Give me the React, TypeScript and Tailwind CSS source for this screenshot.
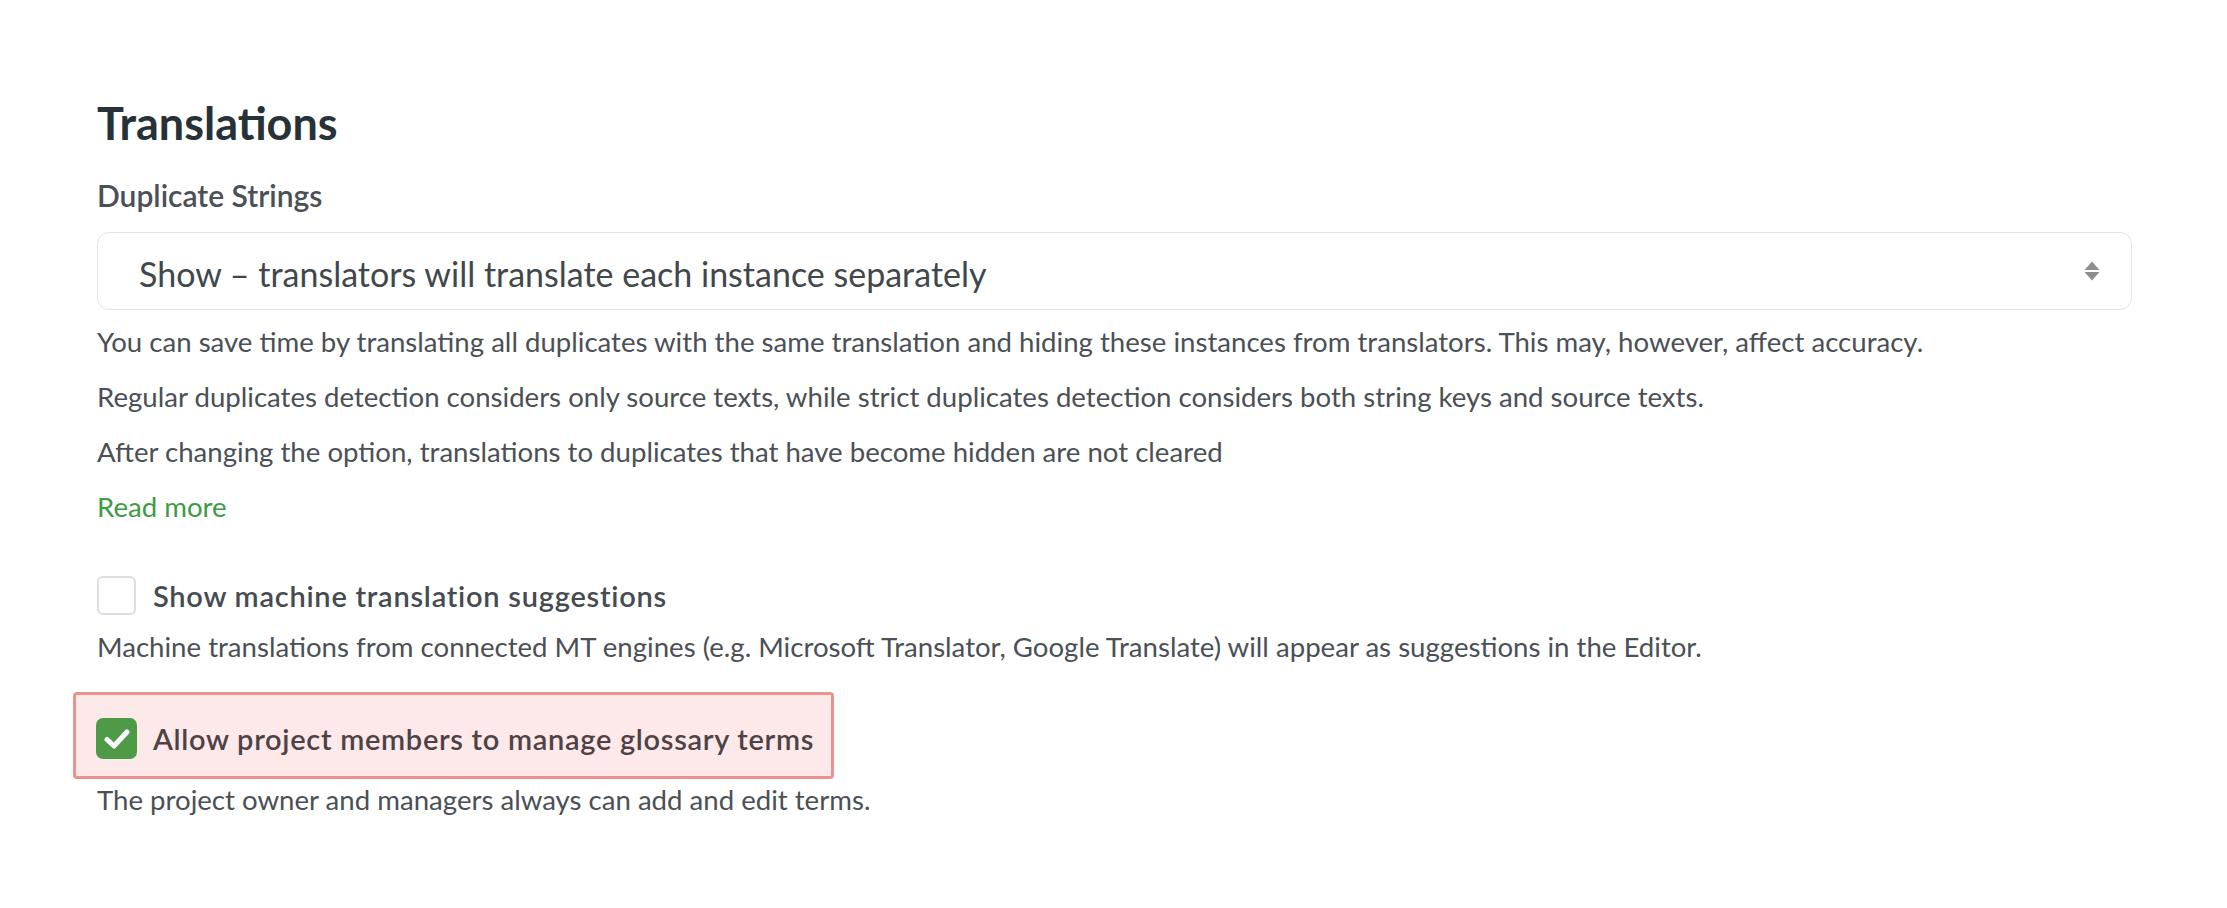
import { useState } from 'react'

const font = { fontFamily: 'Lato, "Noto Sans", sans-serif' }

function UpDown() {
  return (
    <svg width="16" height="20" viewBox="0 0 16 20" className="shrink-0">
      <path d="M8 0.5 L15.5 9 H0.5 Z" fill="#8e8e8e" />
      <path d="M8 19.5 L15.5 11 H0.5 Z" fill="#8e8e8e" />
    </svg>
  )
}

function Check({ checked, onChange }: { checked: boolean; onChange: () => void }) {
  return (
    <button
      onClick={onChange}
      className={
        checked
          ? 'w-[41px] h-[41px] shrink-0 rounded-[7px] bg-[#4e9a46] flex items-center justify-center'
          : 'w-[39px] h-[39px] shrink-0 rounded-[6px] border-2 border-[#dedede] bg-white'
      }
    >
      {checked && (
        <svg width="26" height="22" viewBox="0 0 26 22">
          <path d="M3 11.5 L10 18 L23 4" stroke="#fff" strokeWidth="5" fill="none" strokeLinecap="round" strokeLinejoin="round" />
        </svg>
      )}
    </button>
  )
}

export default function App() {
  const [mt, setMt] = useState(false)
  const [glossary, setGlossary] = useState(true)

  return (
    <div className="min-h-screen bg-white pl-[97px] pr-[95px] pt-[101px]" style={font}>
      <h2 className="text-[45px] leading-[44px] font-bold text-[#263238]">Translations</h2>

      <div className="mt-[35px] text-[30px] leading-[30px] font-semibold text-[#4a5055]">Duplicate Strings</div>

      {/* select */}
      <div className="mt-[22px] h-[78px] rounded-[12px] border border-[#e3e3e3] flex items-center justify-between pl-[41px] pr-[31px] pt-[6px]">
        <span className="text-[34px] leading-[34px] text-[#41474c]">Show – translators will translate each instance separately</span>
        <div className="-mt-[6px]"><UpDown /></div>
      </div>

      <div className="mt-[4px] text-[27.6px] leading-[55px] text-[#4a5056]">
        <p>You can save time by translating all duplicates with the same translation and hiding these instances from translators. This may, however, affect accuracy.</p>
        <p>Regular duplicates detection considers only source texts, while strict duplicates detection considers both string keys and source texts.</p>
        <p>After changing the option, translations to duplicates that have become hidden are not cleared</p>
        <p className="text-[#3d9b42]">Read more</p>
      </div>

      <label className="mt-[42px] flex items-center gap-[17px] h-[39px]">
        <Check checked={mt} onChange={() => setMt(!mt)} />
        <span className="text-[29px] leading-[39px] tracking-[0.75px] font-semibold text-[#454b50]">Show machine translation suggestions</span>
      </label>
      <p className="mt-[12px] text-[27.6px] leading-[40px] text-[#4a5056]">
        Machine translations from connected MT engines (e.g. Microsoft Translator, Google Translate) will appear as suggestions in the Editor.
      </p>

      <div className="mt-[25px] ml-[-24px] w-fit rounded-[4px] border-[3px] border-[#e9928f] bg-[#fde9e9] pl-[20px] pr-[17px] pt-[23px] pb-[17px]">
        <label className="flex items-center gap-[16px] h-[41px]">
          <Check checked={glossary} onChange={() => setGlossary(!glossary)} />
          <span className="text-[29px] leading-[41px] tracking-[0.7px] font-semibold text-[#4d4245]">Allow project members to manage glossary terms</span>
        </label>
      </div>
      <p className="mt-[3px] text-[27.6px] leading-[36px] text-[#4a5056]">The project owner and managers always can add and edit terms.</p>
    </div>
  )
}
